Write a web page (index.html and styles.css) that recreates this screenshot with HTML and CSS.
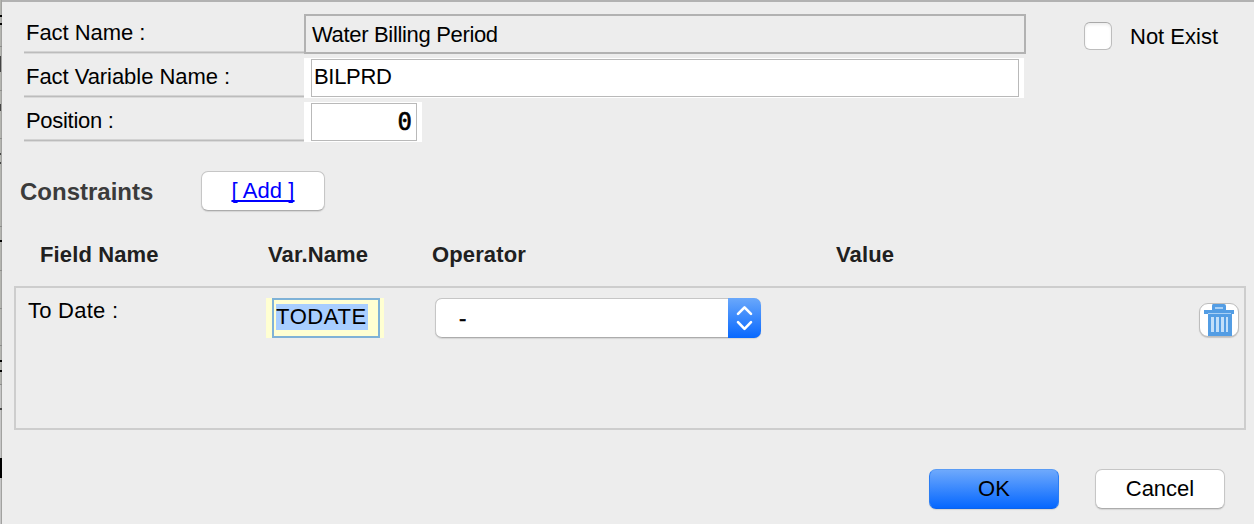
FILE: index.html
```html
<!DOCTYPE html>
<html lang="en">
<head>
<meta charset="utf-8">
<title>Fact Constraints</title>
<link rel="stylesheet" href="styles.css">
</head>
<body>
<svg class="backdrop" width="2" height="524" viewBox="0 0 2 524" shape-rendering="crispEdges">
  <rect width="2" height="385" fill="#b4b5b0"/>
  <rect y="385" width="2" height="139" fill="#c6c6c6"/>
  <rect x="1" width="1" height="524" fill="#a2a2a0"/>
  <path d="M0 46h2M0 90h2M0 138h2M0 226h2M0 270h2M0 308h2M0 345h2M0 384h2" stroke="#8c8c8a"/>
  <path d="M0 15h2v2H0zM0 23h2v2H0zM0 240h2v2H0zM0 360h2v2H0zM0 370h2v2H0zM0 458h2v20H0z"/>
  <path d="M0 56h1v16H0zM0 104h1v7H0zM0 153h1v2H0zM0 162h1v2H0zM0 408h2v2H0z" fill="#444"/>
</svg>
<main class="dialog">
  <section class="fact">
    <div class="fields">
      <div class="row"><label class="label">Fact Name :</label><div class="readonly">Water Billing Period</div></div>
      <div class="row"><label class="label">Fact Variable Name :</label><div class="cell cell-wide"><div class="input">BILPRD</div></div></div>
      <div class="row"><label class="label label-tight">Position :</label><div class="cell cell-small"><div class="input number">0</div></div></div>
    </div>
    <div class="exist"><span class="checkbox"></span><span class="exist-text">Not Exist</span></div>
  </section>
  <section class="constraints">
    <h2 class="title">Constraints</h2>
    <button class="button add"><span>[ Add ]</span></button>
  </section>
  <div class="columns heads"><span>Field Name</span><span>Var.Name</span><span>Operator</span><span>Value</span></div>
  <section class="panel">
    <div class="field-name">To Date :</div>
    <div class="var-cell"><div class="var-input"><span class="selection">TODATE</span></div></div>
    <div class="select"><span class="select-text">-</span><span class="stepper"><svg width="33" height="40" viewBox="0 0 33 40" fill="none" stroke="#fff" stroke-width="2.6" stroke-linecap="round" stroke-linejoin="round"><path d="M10 15.800l6.500-6.500 6.500 6.500M10 24.200l6.500 6.700 6.500-6.700"/></svg></span></div>
    <button class="trash" aria-label="Delete"><svg width="38" height="32" viewBox="0 0 38 32"><path fill="#539de4" d="M13 0h11q2 0 2 2v4h8v4h-2v22H8V10H4V6h8V2q0-2 1-2z"/><path fill="#a9d0f5" d="M15 3h8v2h-8zM8 9h23v1H8z"/><path fill="#c3dff9" d="M11 13h3v15h-3zM16 13h3v15h-3zM21 13h3v15h-3zM26 13h2v15h-2z"/></svg></button>
  </section>
  <footer class="actions"><button class="button primary">OK</button><button class="button">Cancel</button></footer>
</main>
</body>
</html>
```
FILE: styles.css
```css
* { box-sizing: border-box; }
body {
  margin: 0;
  width: 1254px;
  height: 524px;
  display: flex;
  overflow: hidden;
  background: #ededed;
  color: #000;
  font: 22px/26px "Liberation Sans", Arial, sans-serif;
}
button { font: inherit; color: inherit; padding: 0; }
.backdrop { flex: none; display: block; }
.dialog {
  flex: 1;
  height: 524px;
  border-top: 2px solid #b2b2b2;
}
.fact { display: flex; padding: 12px 0 0 22px; }
.fields { display: flex; flex-direction: column; gap: 4px; width: 1060px; }
.row { display: flex; height: 40px; }
.label {
  width: 280px;
  height: 40px;
  padding: 6px 0 0 2px;
  background: linear-gradient(#d3d3d3 1px, #bcbcbc 1px 2px, #d9d9d9 2px) 0 100% / 100% 3px no-repeat;
  letter-spacing: -0.05px;
}
.label-tight { letter-spacing: -0.3px; }
.readonly {
  width: 722px;
  border: 2px solid #b2b2b2;
  padding: 6px 0 0 6px;
  letter-spacing: -0.33px;
}
.cell { background: #fff; padding: 1px 5px 1px 7px; }
.cell-wide { width: 720px; }
.cell-small { width: 118px; }
.input { height: 38px; border: 1px solid #b9b9b9; padding: 4px 0 0 2px; letter-spacing: -0.3px; }
.number {
  padding: 5px 4px 0 0;
  text-align: right;
  font-family: "DejaVu Sans Mono", monospace;
  font-size: 24px;
  letter-spacing: 0;
  -webkit-text-stroke: 0.6px #000;
}
.exist { display: flex; gap: 18px; padding-top: 8px; line-height: 28px; }
.exist-text { padding-top: 1px; }
.checkbox {
  width: 28px;
  height: 28px;
  border: 1px solid #bdbdbd;
  border-top-color: #a9a9a9;
  border-radius: 6px;
  background: #fff;
  box-shadow: inset 0 2px 3px #eee;
}
.constraints { display: flex; height: 41px; margin: 29px 0 0 18px; }
.title { width: 181px; margin: 0; padding-top: 8px; color: #3b3b3b; font-size: 24px; line-height: 26px; }
.button {
  width: 130px;
  height: 40px;
  border: 1px solid #c6c6c6;
  border-bottom-color: #acacac;
  border-radius: 7px;
  background: #fff;
  box-shadow: 0 1px 1px #d4d4d4;
}
.add { width: 124px; color: #00f; text-decoration: underline; text-decoration-skip-ink: none; letter-spacing: 0.1px; }
.columns {
  display: grid;
  grid-template-columns: 228px 164px 404px 1fr;
  margin: 30px 0 0 38px;
  height: 44px;
  color: #202020;
  font-weight: bold;
  letter-spacing: 0.12px;
}
.panel {
  display: flex;
  width: 1232px;
  height: 144px;
  margin-left: 12px;
  padding: 10px 4px 0 12px;
  border: 2px solid #cdcdcd;
}
.field-name { width: 238px; letter-spacing: 0.25px; }
.var-cell { width: 118px; height: 40px; padding: 0 4px 0 6px; background: #ffffd2; }
.var-input { height: 40px; border: 2px solid #7fb2d7; padding: 4px 0 0 2px; }
.selection { display: block; width: 92px; height: 26px; background: #a8ceff; line-height: 26px; letter-spacing: 0.6px; }
.select {
  display: flex;
  width: 326px;
  height: 40px;
  margin-left: 51px;
  border-radius: 7px;
  overflow: hidden;
  background: #fff;
  box-shadow: inset 1px 0 #c6c6c6, inset 0 1px #c6c6c6, inset 0 -1px #acacac, 0 1px 1px #d4d4d4;
}
.select-text { width: 293px; padding: 8px 0 0 24px; -webkit-text-stroke: 0.5px #000; }
.stepper { height: 40px; background: linear-gradient(#6aa8fb, #0868fe); }
.stepper svg { display: block; }
.trash {
  width: 40px;
  height: 34px;
  margin: 5px 0 0 438px;
  border: 1px solid #bdbdbd;
  border-radius: 9px;
  background: #fff;
  box-shadow: 0 1px 1px #c6c6c6;
}
.trash svg { display: block; }
.actions { display: flex; gap: 36px; margin: 39px 0 0 927px; }
.primary {
  border-color: #5a9cf5 #2b7df3 #0b63ec;
  background: linear-gradient(#6ea9fc, #0567ff);
}
```
